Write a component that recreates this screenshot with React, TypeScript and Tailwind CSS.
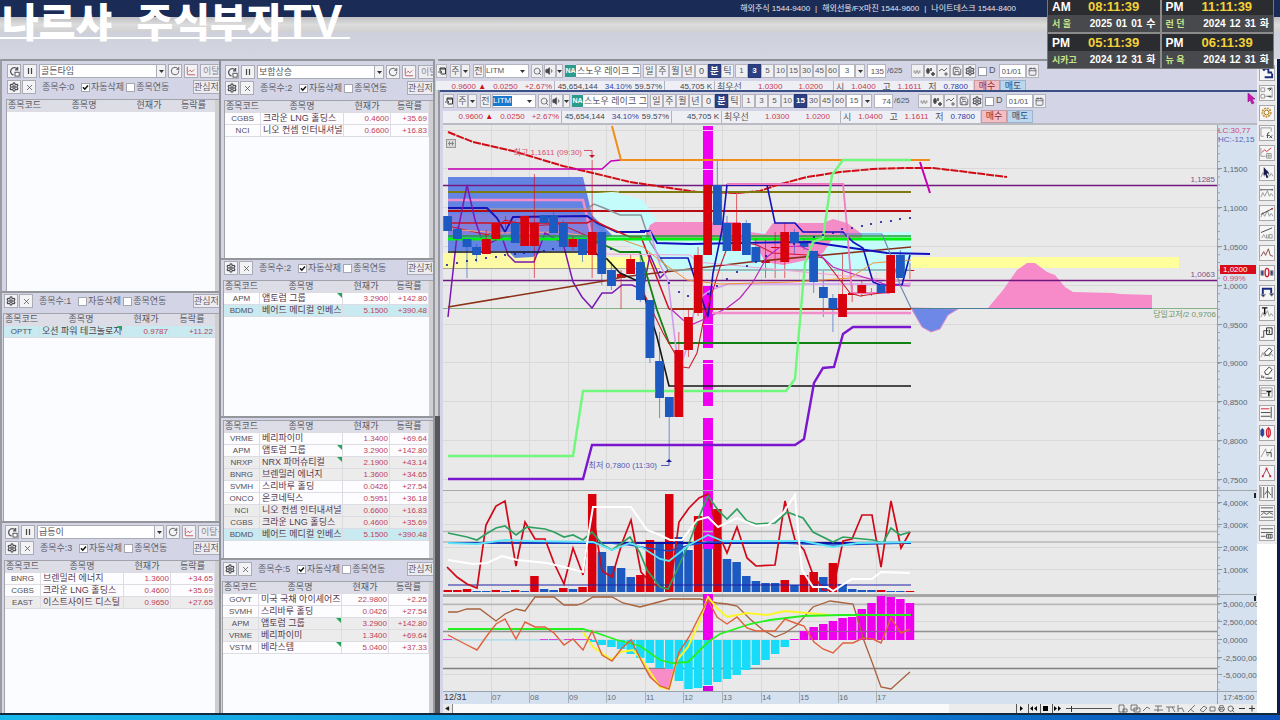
import type { ReactNode } from 'react'
import { Calendar, ChartLine, Play, Printer, RotateCw, Save, Search, Settings, Volume1, X } from 'lucide-react'

type Row = { code: string; name: string; price: string; rate: string; tone?: string; flag?: boolean }

const PLAIN = 'bg-[#fdfdff]'
const GREY = 'bg-[#ececec]'
const CYAN = 'bg-[#c9eaf0]'

const goldenRows: Row[] = []
const optRows: Row[] = [
  { code: 'OPTT', name: '오션 파워 테크놀로지', price: '0.9787', rate: '+11.22', tone: CYAN, flag: true },
]
const surgeRows: Row[] = [
  { code: 'BNRG', name: '브렌밀러 에너지', price: '1.3600', rate: '+34.65' },
  { code: 'CGBS', name: '크라운 LNG 홀딩스', price: '0.4600', rate: '+35.69' },
  { code: 'EAST', name: '이스트사이드 디스틸', price: '0.9650', rate: '+27.65', tone: GREY },
]
const flatRows: Row[] = [
  { code: 'CGBS', name: '크라운 LNG 홀딩스', price: '0.4600', rate: '+35.69' },
  { code: 'NCI', name: '니오 컨셉 인터내셔널', price: '0.6600', rate: '+16.83' },
]
const apmRows: Row[] = [
  { code: 'APM', name: '앱토럼 그룹', price: '3.2900', rate: '+142.80', flag: true },
  { code: 'BDMD', name: '베어드 메디컬 인베스', price: '5.1500', rate: '+390.48', tone: CYAN },
]
const watchRows: Row[] = [
  { code: 'VRME', name: '베리파이미', price: '1.3400', rate: '+69.64' },
  { code: 'APM', name: '앱토럼 그룹', price: '3.2900', rate: '+142.80', flag: true },
  { code: 'NRXP', name: 'NRX 파머슈티컬', price: '2.1900', rate: '+43.14', tone: GREY, flag: true },
  { code: 'BNRG', name: '브렌밀러 에너지', price: '1.3600', rate: '+34.65', tone: GREY },
  { code: 'SVMH', name: '스리바루 홀딩', price: '0.0426', rate: '+27.54' },
  { code: 'ONCO', name: '온코네틱스', price: '0.5951', rate: '+36.18' },
  { code: 'NCI', name: '니오 컨셉 인터내셔널', price: '0.6600', rate: '+16.83', tone: GREY },
  { code: 'CGBS', name: '크라운 LNG 홀딩스', price: '0.4600', rate: '+35.69', tone: GREY },
  { code: 'BDMD', name: '베어드 메디컬 인베스', price: '5.1500', rate: '+390.48', tone: CYAN },
]
const bottomRows: Row[] = [
  { code: 'GOVT', name: '미국 국채 아이셰어즈', price: '22.9800', rate: '+2.25' },
  { code: 'SVMH', name: '스리바루 홀딩', price: '0.0426', rate: '+27.54' },
  { code: 'APM', name: '앱토럼 그룹', price: '3.2900', rate: '+142.80', tone: GREY, flag: true },
  { code: 'VRME', name: '베리파이미', price: '1.3400', rate: '+69.64', tone: GREY },
  { code: 'VSTM', name: '베라스템', price: '5.0400', rate: '+37.33', flag: true },
]

const IconButton = ({ label, children }: { label: string; children: ReactNode }) => (
  <button
    type="button"
    aria-label={label}
    className="flex h-[14px] w-[14px] shrink-0 items-center justify-center border border-[#a9abb5] bg-[#f3f3f6] text-[#4c4c52]"
  >
    {children}
  </button>
)

const Arrow = () => (
  <svg className="h-[3px] w-[5px]" viewBox="0 0 5 3">
    <path d="M0 0h5l-2.5 3z" fill="#333" />
  </svg>
)

const PauseIcon = () => (
  <svg className="h-2 w-2" viewBox="0 0 8 8">
    <path d="M2.5 1v6M5.5 1v6" stroke="#444" strokeWidth="1.2" />
  </svg>
)

const ReloadSaveIcon = () => (
  <svg className="h-[11px] w-[11px]" viewBox="0 0 11 11" fill="none" stroke="#55555c" strokeWidth="1.3">
    <path d="M4.5 9A3.7 3.7 0 1 1 8.4 3.4M8.6 1v2.8H6" />
    <rect x="6" y="6.3" width="4.2" height="3.8" fill="#fff" strokeWidth="1" />
  </svg>
)

const Tick = ({ label, checked }: { label: string; checked?: boolean }) => (
  <label className="flex shrink-0 items-center gap-px whitespace-nowrap">
    <span className="grid h-[9px] w-[9px]">
      <input
        type="checkbox"
        defaultChecked={checked}
        className="peer col-start-1 row-start-1 h-[9px] w-[9px] appearance-none border border-[#a4a6b2] bg-white"
      />
      <svg className="pointer-events-none col-start-1 row-start-1 h-[9px] w-[9px] opacity-0 peer-checked:opacity-100" viewBox="0 0 9 9" fill="none">
        <path d="M2 4.2l1.8 2L7 2.5" stroke="#111" strokeWidth="1.5" />
      </svg>
    </span>
    {label}
  </label>
)

const Controls = ({ title, count, checked }: { title?: string; count: number; checked?: boolean }) => (
  <div className="flex shrink-0 flex-col gap-[2px] overflow-hidden pb-[5px] text-[9px] leading-[14px] text-[#5f6069]">
    {title && (
      <div className="flex gap-[2px] pl-px">
        <IconButton label="재검색"><ReloadSaveIcon /></IconButton>
        <IconButton label="일시정지"><PauseIcon /></IconButton>
        <select
          aria-label="검색식"
          defaultValue={title}
          className="h-[14px] w-[118px] shrink-0 appearance-none border border-[#a9abb5] bg-white pl-[1px] leading-3 text-[#55555c]"
        >
          <option>{title}</option>
        </select>
        <button type="button" aria-label="펼치기" className="-ml-[3px] flex h-[14px] w-[10px] shrink-0 items-center justify-center border border-[#a9abb5] bg-[#f3f3f6]"><Arrow /></button>
        <IconButton label="새로고침"><RotateCw size={10} /></IconButton>
        <IconButton label="차트"><ChartLine size={10} color="#b8424c" /></IconButton>
        <button type="button" className="h-[14px] shrink-0 border border-[#a9abb5] bg-[#ececf2] px-[2px] leading-3 text-[#8a8b93]">이탈삭</button>
      </div>
    )}
    <div className="flex items-center pl-px">
      <IconButton label="설정"><Settings size={10} strokeWidth={3} /></IconButton>
      <span className="w-[1px]" />
      <IconButton label="닫기"><X size={9} /></IconButton>
      <span className="ml-[6px] w-[39px] shrink-0">종목수:{count}</span>
      <Tick label="자동삭제" checked={checked} />
      <span className="w-[2px] shrink-0" />
      <Tick label="종목연동" />
      <button type="button" className="ml-auto h-[14px] w-[26px] shrink-0 overflow-hidden whitespace-nowrap border border-r-0 border-[#a9abb5] bg-[#ececf2] text-left leading-3">관심저</button>
    </div>
  </div>
)

const cell = 'h-3 overflow-hidden whitespace-nowrap border-r border-b border-[#dcdce2] p-0 leading-[11px]'

const StockTable = ({ rows }: { rows: Row[] }) => (
  <div className="flex min-h-0 flex-1 border-l border-t border-[#a2a3aa] bg-[#fbfcff]">
    <div className="min-w-0 flex-1 overflow-hidden">
      <table className="w-full table-fixed border-separate border-spacing-0 text-[9px]">
        <colgroup>
          <col className="w-[36px]" />
          <col className="w-[83px]" />
          <col className="w-[47px]" />
          <col />
        </colgroup>
        <thead className="bg-[#dcdde7] text-[#55565f]">
          <tr>
            {['종목코드', '종목명', '현재가', '등락률'].map((h) => (
              <th key={h} className={`${cell} border-[#c3c4cf] font-normal`}>{h}</th>
            ))}
          </tr>
        </thead>
        <tbody>
          {rows.map((r) => (
            <tr key={r.code} className={r.tone ?? PLAIN}>
              <td className={`${cell} text-center text-[8px] text-[#50505a]`}>{r.code}</td>
              <td className={`${cell} relative pl-[2px] text-[#573a4c]`}>
                {r.name}
                {r.flag && <i className="absolute right-0 top-0 h-0 w-0 border-l-5 border-t-5 border-l-transparent border-t-[#25a55a]" />}
              </td>
              <td className={`${cell} pr-[1px] text-right text-[8px] text-[#c0405c]`}>{r.price}</td>
              <td className={`${cell} pr-[1px] text-right text-[8px] text-[#c0405c]`}>{r.rate}</td>
            </tr>
          ))}
        </tbody>
      </table>
    </div>
    <div className="w-[4px] shrink-0 bg-[#cfcfd2]" />
  </div>
)

const Panel = ({ title, count, checked, rows, pad }: { title?: string; count?: number; checked?: boolean; rows: Row[]; pad: string }) => (
  <section className={`flex min-h-0 flex-col overflow-hidden border-t-2 border-[#95969c] bg-[#d3d5e6] ${pad}`}>
    {count !== undefined && <Controls title={title} count={count} checked={checked} />}
    <StockTable rows={rows} />
  </section>
)

const clocks = [
  { half: 'AM', time: '08:11:39', city: '서 울', date: ['2025', '01', '01', '수'] },
  { half: 'PM', time: '11:11:39', city: '런 던', date: ['2024', '12', '31', '화'] },
  { half: 'PM', time: '05:11:39', city: '시카고', date: ['2024', '12', '31', '화'] },
  { half: 'PM', time: '06:11:39', city: '뉴 욕', date: ['2024', '12', '31', '화'] },
]

const WorldClock = () => (
  <div className="absolute right-[6px] top-[-3px] z-10 grid w-[227px] grid-cols-2 gap-x-[2px] gap-y-[2px] border border-[#777] bg-[#8b8b8b] font-bold">
    {clocks.map((c) => (
      <div key={c.city} className="bg-[#2b2c2f]">
        <div className="flex h-[17px] items-center px-1">
          <span className="w-[36px] text-[12px] text-white">{c.half}</span>
          <span className="text-[13px] text-[#f3d238]">{c.time}</span>
        </div>
        <div className="flex h-[17px] items-center bg-[#48494c] px-1 text-[10px] leading-3">
          <span className="w-[38px] text-[9px] text-[#c6e58a]">{c.city}</span>
          <span className="flex gap-1 whitespace-nowrap text-white">{c.date.map((d, i) => <span key={i}>{d}</span>)}</span>
        </div>
      </div>
    ))}
  </div>
)

const key = 'h-[14px] shrink-0 border border-[#b3b4be] bg-[#f0f0f3] text-center leading-3 text-[#55565e]'
const keyOn = 'h-[14px] shrink-0 border border-[#26387a] bg-[#2c3f80] text-center font-bold leading-3 text-white'

const ChartBar = ({ unit, bars, selected }: { unit: string; bars: string; selected?: boolean }) => (
  <div className="flex h-[18px] items-center overflow-hidden whitespace-nowrap text-[9px] text-[#55565e]">
    <button type="button" aria-label="창" className={`${key} mr-[3px] flex w-[11px] items-center justify-center`}>
      <svg className="h-2 w-2" viewBox="0 0 8 8" fill="none" stroke="#333"><path d="M2 4V1h5.5v6H3M2 2h5.5" /><path d="M0 5h4M2 3.5L4 5 2 6.5" strokeWidth="0.8" /></svg>
    </button>
    <button type="button" className={`${key} w-[11px]`}>주</button>
    <button type="button" aria-label="주기" className={`${key} mr-[3px] flex w-[9px] items-center justify-center`}><Arrow /></button>
    <button type="button" className={`${key} mr-px w-[11px]`}>전</button>
    <div className="flex h-[14px] w-[44px] shrink-0 items-center border border-[#b3b4be] bg-white pr-[3px]">
      <input
        aria-label="종목코드"
        defaultValue="LITM"
        className={selected ? 'h-[10px] w-[19px] bg-[#1878d0] text-[8px] text-white' : 'h-[10px] w-[19px] text-[8px]'}
      />
      <span className="ml-auto"><Arrow /></span>
    </div>
    <button type="button" aria-label="검색" className={`${key} ml-[2px] flex w-[12px] items-center justify-center`}><Search size={9} /></button>
    <button type="button" aria-label="소리" className={`${key} ml-px flex w-[12px] items-center justify-center`}><Volume1 size={10} fill="#444" /></button>
    <button type="button" aria-label="소리 설정" className={`${key} mr-[2px] flex w-[7px] items-center justify-center`}><Arrow /></button>
    <span className="h-[12px] w-[11px] bg-[#2b9c8b] text-center text-[7px] font-bold leading-3 text-white">NA</span>
    <span className="mr-[2px] h-[14px] w-[65px] overflow-hidden border-y border-r border-[#b3b4be] bg-white pl-px leading-3">스노우 레이크 그</span>
    {['일', '주', '월', '년', '0'].map((t) => (
      <button key={t} type="button" className={`${key} w-[13px]`}>{t}</button>
    ))}
    <button type="button" className={`${keyOn} w-[13px]`}>분</button>
    <button type="button" className={`${key} mr-px w-[13px]`}>틱</button>
    {['1', '3', '5', '10', '15', '30', '45', '60'].map((t) => (
      <button key={t} type="button" className={t === unit ? `${keyOn} w-[13px] text-[8px]` : `${key} w-[13px] text-[8px]`}>{t}</button>
    ))}
    <span className="h-[14px] w-[16px] border border-[#b3b4be] bg-white text-center text-[8px] leading-3">{unit}</span>
    <button type="button" aria-label="분 선택" className={`${key} mr-[2px] flex w-[10px] items-center justify-center`}><Arrow /></button>
    <input aria-label="봉 개수" defaultValue={bars} className="h-[14px] w-[19px] border border-[#b3b4be] bg-white pr-px text-right text-[8px]" />
    <span className="w-[25px] pl-px text-[8px]">/625</span>
    {[
      <path key="w" d="M1 3l1.5 4L4 3l1.5 4L7 3M0 5h8" stroke="#999" />,
      <path key="c" d="M2 1v6M1 3h2v2H1zM5 1v3M5 7h4M7 5v4" strokeWidth="1.5" />,
      <path key="l" d="M0 4l3-2 2 2 3-3M5 7h4M7 5v4" />,
    ].map((shape, i) => (
      <button key={i} type="button" aria-label={`도구 ${i + 1}`} className={`${key} flex w-[13px] items-center justify-center`}>
        <svg className="h-[9px] w-[9px]" viewBox="0 0 9 9" fill="none" stroke="#444" strokeWidth="0.8">{shape}</svg>
      </button>
    ))}
    <button type="button" aria-label="저장" className={`${key} flex w-[13px] items-center justify-center`}><Save size={10} /></button>
    <button type="button" aria-label="설정" className={`${key} mr-[2px] flex w-[13px] items-center justify-center`}><Settings size={10} strokeWidth={3} /></button>
    <label className="flex items-center gap-[2px]">
      <input type="checkbox" className="h-[9px] w-[9px] appearance-none border border-[#9799a6] bg-white" />D
    </label>
    <input aria-label="날짜" defaultValue="01/01" className="ml-[3px] h-[14px] w-[27px] border border-[#b3b4be] bg-white pl-[2px] text-[8px]" />
    <button type="button" aria-label="달력" className={`${key} flex w-[13px] items-center justify-center`}><Calendar size={9} /></button>
  </div>
)

const QuoteBar = () => (
  <div className="flex h-[13px] items-center whitespace-nowrap text-[8px] leading-3 text-[#44454c]">
    <div className="flex w-[119px] justify-end gap-[7px] border-r border-[#b3b4be] bg-[#eeeff5] pr-[2px] text-[#cc3a4c]">
      <span>0.9600 <b className="text-[#d01020]">▲</b></span><span>0.0250</span><span>+2.67%</span>
    </div>
    <div className="flex w-[110px] justify-end gap-[3px] border-r border-[#b3b4be] bg-[#eeeff5] pr-[2px]">
      <span className="mr-[4px]">45,654,144</span><span className="text-[#3344a8]">34.10%</span><span>59.57%</span>
    </div>
    <div className="w-[50px] border-r border-[#b3b4be] bg-[#eeeff5] pr-[2px] text-right">45,705 K</div>
    <div className="flex w-[119px] justify-between border-r border-[#b3b4be] bg-[#eeeff5] pl-[2px] pr-[10px] text-[#cc3a4c]">
      <span className="text-[9px] text-[#55565e]">최우선</span><span>1.0300</span><span>1.0200</span>
    </div>
    <div className="mr-px flex w-[139px] justify-between bg-[#eeeff5] pl-[2px] pr-[5px] text-[#cc3a4c]">
      <span className="text-[9px] text-[#55565e]">시</span><span>1.0400</span>
      <span className="text-[9px] text-[#55565e]">고</span><span>1.1611</span>
      <span className="text-[9px] text-[#55565e]">저</span><span className="text-[#2b38a8]">0.7800</span>
    </div>
    <button type="button" className="w-[26px] border border-[#c79aa4] bg-[#f3bfc4] text-[9px] leading-[11px] text-[#8c2430]">매수</button>
    <button type="button" className="w-[26px] border border-[#9db4d0] bg-[#bcd6ee] text-[9px] leading-[11px] text-[#24446c]">매도</button>
  </div>
)

// price axis: 1.0000 sits at y=285, one 0.05 step is 38.8px
const priceTicks = [
  [168, '1,1500'], [207, '1,1000'], [246, '1,0500'], [285, '1,0000'], [324, '0,9500'],
  [362, '0,9000'], [401, '0,8500'], [440, '0,8000'], [479, '0,7500'],
] as const
const volumeTicks = [[502, '4,000K'], [524, '3,000K'], [547, '2,000K'], [569, '1,000K']] as const
const macdTicks = [[603, '5,000,000'], [621, '2,500,000'], [639, '0,0000'], [657, '-2,500,00'], [674, '-5,000,00']] as const
const hours = [[492, '07'], [530, '08'], [569, '09'], [607, '10'], [646, '11'], [684, '12'], [723, '13'], [762, '14'], [800, '15'], [839, '16'], [877, '17']] as const

const barX = (i: number) => 447.7 + i * 9.63
const RED = '#d9000d'
const BLUE = '#1c59c0'

// body top, body bottom, wick top, wick bottom, up
const candles: [number, number, number, number, boolean][] = [
  [216, 231, 216, 231, false], [229, 239, 226, 241, false], [239, 247, 239, 278, false], [247, 255, 244, 262, false],
  [239, 254, 230, 254, true], [223, 239, 223, 241, true], [222, 224, 216, 228, true], [223, 243, 220, 243, false],
  [216, 246, 216, 246, true], [223, 246, 174, 278, true], [215, 223, 215, 223, false], [215, 233, 212, 233, false],
  [223, 247, 220, 247, false], [239, 247, 236, 250, true], [239, 255, 239, 262, false], [232, 255, 160, 278, true],
  [232, 274, 232, 285, false], [270, 286, 262, 290, false], [274, 278, 270, 309, true], [259, 274, 255, 274, true],
  [262, 300, 252, 302, false], [300, 358, 300, 363, false], [361, 398, 332, 418, false], [397, 417, 397, 461, false],
  [350, 417, 332, 417, true], [317, 350, 309, 357, true], [255, 313, 247, 316, true], [185, 255, 185, 255, true],
  [185, 225, 161, 225, false], [223, 251, 216, 251, false], [223, 251, 193, 251, true], [223, 255, 220, 255, false],
  [247, 262, 239, 262, false], [261, 263, 240, 278, true], [247, 248, 232, 278, true], [232, 262, 223, 278, true],
  [232, 243, 229, 255, false], [242, 247, 239, 250, false], [251, 282, 251, 293, false], [287, 298, 271, 317, false],
  [298, 309, 294, 332, false], [294, 317, 254, 317, true], [293, 295, 285, 302, true], [285, 293, 281, 297, true],
  [292, 293, 288, 296, true], [285, 293, 280, 293, false], [255, 293, 255, 293, true], [255, 278, 250, 278, false],
  [270, 271, 263, 279, true],
]

// height in px and direction
const volume: [number, string][] = [
  [2, RED], [2, RED], [3, RED], [1, BLUE], [1, BLUE], [2, RED], [1, BLUE], [2, RED], [1, BLUE], [16, RED],
  [3, BLUE], [2, BLUE], [4, RED], [3, BLUE], [5, RED], [98, RED], [40, BLUE], [26, BLUE], [24, BLUE], [15, BLUE],
  [17, RED], [52, RED], [49, BLUE], [98, RED], [55, BLUE], [42, BLUE], [76, RED], [43, BLUE], [83, RED], [33, BLUE],
  [30, BLUE], [16, BLUE], [11, BLUE], [9, BLUE], [9, BLUE], [12, RED], [7, BLUE], [17, RED], [20, RED], [15, BLUE],
  [29, RED], [8, BLUE], [3, BLUE], [2, BLUE], [2, BLUE], [2, RED], [1, BLUE], [1, BLUE], [1, RED],
]

// starts at bar 15, negative hangs below the zero line
const histogram = [
  -2, -5, -7, -9, -14, -18, -23, -28, -36, -41, -49, -48, -45, -42, -39, -35, -30, -25, -20, -14, -7, 1,
  9, 13, 16, 19, 22, 23, 31, 37, 44, 43, 41, 37,
]

const dots = [
  [447, 265], [457, 263], [467, 261], [476, 260], [486, 258], [496, 257], [505, 255], [515, 254], [524, 253], [534, 252],
  [544, 251], [553, 249], [611, 249], [660, 272], [669, 283], [679, 292], [688, 296], [708, 294], [717, 286], [727, 279],
  [737, 272], [747, 266], [756, 262], [766, 256], [794, 244], [814, 237], [823, 235], [833, 233], [842, 229], [852, 228],
  [862, 226], [871, 224], [881, 222], [891, 221], [900, 219], [910, 218],
]

type Line = { p: string; c: string; w?: number }

// drawn behind the candles
const levels: Line[] = [
  { p: '448,169 602,169 611,161 621,160', c: '#c400b4', w: 1.5 },
  { p: '612,126 621,160 930,160', c: '#f28c18', w: 2 },
  { p: '920,162 930,193', c: '#c400b4', w: 2 },
  { p: '448,192 911,192', c: '#7e7a10', w: 2 },
  { p: '590,194 619,192', c: '#d9ffee', w: 1 },
  { p: '448,200 583,200 592,238', c: '#f48ccc', w: 2.5 },
  { p: '448,211 911,211', c: '#b50c14', w: 2 },
  { p: '448,209 590,209', c: '#caa07a', w: 1 },
  { p: '448,208 487,208 497,218 505,232 513,217 587,216 597,223 617,232 645,232', c: '#1414b8', w: 1.8 },
  { p: '448,223 587,223 593,220 607,227 630,237 641,237 669,309', c: '#d01020', w: 1.5 },
  { p: '587,209 594,204 604,208 620,215 641,215 650,242 668,270', c: '#8a9498', w: 1.5 },
  { p: '448,226 470,231 488,235 505,220 530,226 560,224 592,238', c: '#d01020', w: 1 },
  { p: '448,229 500,233 560,232 592,237', c: '#f9a080', w: 1 },
  { p: '448,317 457,235 467,185 475,220 484,246 502,237 508,255 515,262 534,262 545,233 563,243 573,282 582,297 592,308 602,293 612,293 622,285 632,285 643,290 650,255 660,278 668,270', c: '#7a18b4', w: 1.5 },
  { p: '448,236 911,236', c: '#1e9c3a', w: 1.5 },
  { p: '448,239 911,239', c: '#00f010', w: 3 },
]

const overlays: Line[] = [
  { p: '448,307 610,280 622,277 750,262 911,247', c: '#8c3018', w: 1.6 },
  { p: '448,252 592,252 607,259 620,273 640,282 657,337 669,386 911,386', c: '#161616', w: 1.6 },
  { p: '593,240 620,252 640,252 657,310 669,343 911,343', c: '#128012', w: 1.8 },
  { p: '669,309 911,309', c: '#a4280e', w: 2 },
  { p: '640,231 650,231 657,243 690,244 740,243 810,242 887,253 930,254', c: '#1010c0', w: 1.8 },
  { p: '650,231 660,265 668,280 676,348 681,364 688,345 696,300 711,290 728,284 911,284', c: '#d29af0', w: 1.6 },
  { p: '668,270 911,270', c: '#98a2a0', w: 1.4 },
  { p: '600,254 690,255 697,262 911,282', c: '#f2a4d4', w: 1.2 },
  { p: '660,258 688,258 693,273 708,317 713,273 722,230 727,185 767,185 775,223 795,223 803,232 843,232 853,242 863,248 873,282 880,285 902,285 910,255', c: '#1212b8', w: 1.6 },
  { p: '727,184 843,184 847,227 852,293 890,293', c: '#f07cc0', w: 1.8 },
  { p: '640,285 663,333 677,357 683,367 689,368 697,353 703,323 720,267 730,240 757,245 773,253 807,255 823,258 840,280 850,293 860,296 887,292', c: '#d01828', w: 1.1 },
  { p: '672,310 683,320 693,324 707,318 727,308 740,298 753,282 767,257 780,247 800,246 820,255 833,267 850,273 873,280 887,285 910,286', c: '#bc22c0', w: 1.2 },
  { p: '623,240 643,247 663,263 687,280 720,284 790,282 823,280 850,278 873,263 911,260', c: '#f09038', w: 1 },
  { p: '882,234 890,253 900,285 911,308', c: '#6e8aa8', w: 1.2 },
  { p: '840,234 882,234', c: '#5878d8', w: 1 },
  { p: '712,313 911,313', c: '#f48ccc', w: 2.5 },
  { p: '448,456 573,456 583,391 786,391 795,379 798,343 805,263 813,242 823,238 832,175 843,160 911,160', c: '#6ff87c', w: 2.4 },
  { p: '448,479 583,479 592,445 795,445 804,439 814,383 823,368 834,367 843,334 853,327 911,327', c: '#7a16d0', w: 2.4 },
]

const oscillators: Line[] = [
  { p: '448,543 911,543', c: '#1010a8', w: 2 },
  { p: '448,585 911,585', c: '#2020a8', w: 1.2 },
  { p: '448,543 610,543 630,545 647,548 669,551 690,545 708,542 780,543 833,545 911,543', c: '#1c4cc8', w: 1.5 },
  { p: '447,567 457,577 467,584 477,588 486,525 496,506 505,501 516,566 525,522 535,539 545,539 554,563 564,584 573,548 583,575 592,507 602,571 612,577 622,543 631,520 641,572 650,582 660,587 670,590 679,522 689,508 699,498 708,494 717,530 727,553 737,527 747,558 756,566 775,565 785,501 795,540 804,550 812,572 823,590 833,590 843,541 852,539 862,515 872,515 881,567 891,501 901,548 910,532', c: '#d00818', w: 1.7 },
  { p: '448,533 467,537 477,540 486,534 496,528 505,526 516,535 527,527 545,529 554,532 564,537 573,535 583,540 592,532 603,545 612,550 630,537 640,553 647,570 660,587 668,589 677,570 689,543 699,517 708,496 718,510 727,519 737,509 747,521 756,524 775,523 787,512 803,518 813,532 833,542 843,537 873,540 883,543 891,528 900,535 910,532', c: '#2fa060', w: 1.7 },
  { p: '448,543 477,544 505,540 530,541 593,542 612,550 630,543 643,548 660,559 669,561 679,553 689,545 708,535 723,541 803,541 833,547 857,543 911,542', c: '#5ee4f8', w: 1.8 },
  { p: '448,560 473,564 487,563 502,556 517,560 547,563 564,567 583,572 588,537 593,507 631,507 647,530 660,535 670,540 682,540 697,520 708,517 718,527 737,518 756,526 768,525 783,513 795,495 798,530 802,570 813,587 827,587 833,591 852,579 872,579 881,572 910,573', c: '#ffffff', w: 2 },
]

const macdLines: Line[] = [
  { p: '448,612 457,612 467,609 480,609 496,621 505,614 516,609 525,611 535,597 554,597 564,605 577,605 583,603 593,597 612,597 623,603 640,607 670,599 700,599 717,603 727,604 737,606 750,619 763,630 775,637 785,633 797,625 813,607 830,601 853,604 858,620 863,638 872,662 881,687 891,689 902,679 910,672', c: '#a8603c', w: 1.3 },
  { p: '583,632 593,647 612,660 620,652 633,650 642,660 660,687 669,689 677,660 688,647 699,623 708,597 717,608 727,617 747,613 767,615 785,611 807,613 830,615', c: '#fbf52c', w: 2 },
  { p: '448,629 583,629 597,633 617,640 640,646 660,660 672,663 688,662 697,653 708,642 720,634 750,624 770,620 803,616 840,615 911,615', c: '#28f020', w: 1.8 },
  { p: '448,635 467,645 477,650 486,637 496,624 505,619 516,639 525,622 535,627 545,627 554,633 564,645 573,639 583,650 592,631 602,655 612,661 622,648 631,640 641,660 650,677 660,686 669,689 679,652 689,637 699,617 708,600 717,617 727,624 737,617 747,628 756,631 775,631 785,619 795,623 804,626 814,642 823,649 833,653 843,643 853,643 863,638 873,639 881,643 891,618 901,633 910,629', c: '#e0603c', w: 1.4 },
]

const Lines = ({ of }: { of: Line[] }) => (
  <>{of.map((l) => <polyline key={l.p} points={l.p} stroke={l.c} strokeWidth={l.w} />)}</>
)

const Chart = () => (
  <svg
    className="block h-full w-full font-['Liberation_Sans','Noto_Sans_CJK_KR',sans-serif] text-[8px]"
    viewBox="443 125 814 579"
    preserveAspectRatio="xMinYMin meet"
    fill="none"
  >
    <rect x="443" y="125" width="774" height="566" fill="#e9e9e9" />
    <rect x="1217" y="125" width="40" height="579" fill="#d5e1ee" />
    <rect x="443" y="691" width="774" height="13" fill="#d5e1ee" />

    <g stroke="#d9d9d9">
      {[130, ...priceTicks.map(([y]) => y), ...volumeTicks.map(([y]) => y), ...macdTicks.map(([y]) => y)].map((y) => (
        <path key={y} d={`M443 ${y + 0.5}H1217`} />
      ))}
      {hours.map(([x]) => <path key={x} d={`M${x - 0.5} 125V691`} />)}
    </g>

    {/* clouds */}
    <rect x="448" y="257" width="731" height="11" fill="#ffff9c" />
    <rect x="443" y="253" width="150" height="15" fill="#fdfaa6" />
    <path d="M588 193H617L643 200 658 223 670 232H911V272H668L655 262 640 252 620 240 602 230Z" fill="#c4fcfc" />
    <path d="M592 206L604 209 620 216 641 217 650 236 610 236 596 222Z" fill="#e3eeee" />
    <path d="M448 177H583L592 215 612 235 600 240 592 251H543L533 257 515 258 508 251H448Z" fill="#6484e4" />
    <path d="M448 214H588L600 232 592 236H448Z" fill="#8080dc" />
    <path d="M645 238L650 225 655 222H740L750 232 765 234 773 223H823L833 219 847 223 862 234V238H833L823 253 807 260 783 265 765 262 757 247 752 238Z" fill="#f48cc8" />
    <path d="M911 308L922 327 931 332 940 329 948 315 958 309Z" fill="#6e88e8" stroke="#e08cc8" />
    <path d="M988 308L1003 290 1017 270 1027 263H1035L1047 272 1055 275 1065 287 1073 292 1113 293 1120 294 1152 295V308Z" fill="#f78bca" />

    {/* current session column */}
    <g fill="#f000f0">
      <rect x="703" y="126" width="10" height="60" />
      <rect x="703" y="286" width="10" height="62" />
      <rect x="703" y="360" width="10" height="46" />
      <rect x="703" y="418" width="10" height="131" />
    </g>
    <path d="M703 130.5h10M703 169.5h10M703 324.5h10M703 363.5h10M703 391.5h10M703 440.5h10M703 479.5h10" stroke="#ffc0ff" />

    <path d="M443 185.5H1217M443 280.5H1217" stroke="#701880" strokeWidth="1.5" />
    <path d="M443 268.5H660" stroke="#a8a890" />
    <path d="M443 308.5H1217" stroke="#86b286" />
    <path d="M911 308.5H1152" stroke="#4c8098" />
    <path
      d="M448 132L473 142 513 151 563 166 597 174 630 182 670 188 697 192 737 193 760 191 777 185 807 177 840 172 873 169 907 168 933 168 967 172 1007 177"
      stroke="#d00c14" strokeWidth="2" strokeDasharray="8 1"
    />
    <Lines of={levels} />

    {candles.map(([top, bottom, hi, lo, up], i) => (
      <g key={i} fill={up ? RED : BLUE}>
        <rect x={barX(i) - 0.5} y={hi} width="1" height={lo - hi} opacity="0.6" />
        <rect x={barX(i) - 4.2} y={top} width="8.5" height={bottom - top} />
      </g>
    ))}
    <Lines of={overlays} />
    {candles.map(([top, bottom, , , up], i) =>
      bottom - top > 6 ? <rect key={i} x={barX(i) - 4.2} y={top} width="8.5" height={bottom - top} fill={up ? RED : BLUE} /> : null,
    )}
    {dots.map(([x, y]) => <circle key={x} cx={x} cy={y} r="1.1" fill="#1818a0" />)}

    <g stroke="#b8b8b8">
      <path d="M443 490.5H1257M443 594.5H1257" stroke="#a4a8ac" />
      <path d="M443 531.5H1217M443 542H1217M443 604.5H1217" strokeWidth="1.5" />
      <path d="M443 596H1217" stroke="#8c8c8c" strokeWidth="1.5" />
      <path d="M443 631.5H1217" stroke="#909090" strokeWidth="1.5" />
      <path d="M443 668.5H1217" stroke="#808080" strokeWidth="1.5" />
    </g>

    {/* volume */}
    {volume.map(([h, c], i) => <rect key={i} x={barX(i) - 4.2} y={592 - h} width="8.5" height={h} fill={c} />)}
    <Lines of={oscillators} />

    {/* macd */}
    <path d="M443 640H592" stroke="#98dcf0" />
    <path d="M443 639.5h9M540 639.5h8M549 639.5h9M564 639.5h28" stroke="#e040e0" />
    <rect x="703" y="594" width="10" height="46" fill="#f000f0" />
    {histogram.map((h, i) => (
      <rect key={i} x={barX(i + 15) - 4.2} y={h > 0 ? 640 - h : 640} width="8.5" height={Math.abs(h)} fill={h > 0 ? '#ee00ee' : '#16dcfa'} />
    ))}
    <rect x="703" y="686" width="10" height="5" fill="#d000e0" />
    <path d="M645 669H675L669 689 660 686 650 677Z" fill="#f88cc8" />
    <path d="M812 631.5H911" stroke="#a050a0" />
    <Lines of={macdLines} />

    {/* axes */}
    <path d="M1217.5 125V704M443 691.5H1257" stroke="#9aa2aa" />
    {[...priceTicks, ...volumeTicks, ...macdTicks].map(([y, t]) => (
      <g key={t}>
        <path d={`M1217 ${y + 0.5}h5`} stroke="#8c949c" />
        <text x="1223" y={y + 4} fill="#5c6672">{t}</text>
      </g>
    ))}
    <path d="M1219 130V690" stroke="#9aa2aa" strokeWidth="2" strokeDasharray="1 6.77" />
    {hours.map(([x, t]) => (
      <g key={t}>
        <path d={`M${x - 0.5} 691V703`} stroke="#a8b0b8" />
        <text x={x} y="700" fill="#687078">{t}</text>
      </g>
    ))}
    <text x="444" y="700" fill="#33363c" className="text-[9px]">12/31</text>
    <text x="1223" y="700" fill="#5c6672">17:45:00</text>
    <rect x="1220" y="265" width="36" height="9" fill="#d90a18" />
    <text x="1223" y="272" fill="#fff">1,0200</text>
    <text x="1223" y="281" fill="#d8487c">0.99%</text>
    <text x="1218" y="133" fill="#d0487c">LC:30,77</text>
    <text x="1218" y="142" fill="#5468c0">HC:-12,15</text>
    <g textAnchor="end">
      <text x="1215" y="182" fill="#7c5088">1,1285</text>
      <text x="1215" y="277" fill="#7c5088">1,0063</text>
      <text x="1216" y="317" fill="#6a986a">당일고저/2 0,9706</text>
      <text x="582" y="155" fill="#d85070">최고 1,1611 (09:30)</text>
      <text x="657" y="468" fill="#5458b8">최저 0,7800 (11:30)</text>
    </g>
    <path d="M584 150.5h8v5" stroke="#d85070" />
    <path d="M589 155h6l-3 3z" fill="#c01828" />
    <path d="M661 465.5h8v-5" stroke="#5458b8" />
    <path d="M666 462h6l-3-3z" fill="#1818a0" />
    <rect x="446.5" y="139.5" width="9" height="8" fill="#d8d8d8" stroke="#999" />
    <path d="M448 143.5h6M449.5 141.5v4M452.5 141.5v4" stroke="#888" />
    <path d="M1255 493v5M1255 596v5" stroke="#222" strokeWidth="2" />
  </svg>
)

const transport = [
  { name: '재생', d: 'M3 2l3 2.5L3 7z' },
  { name: '뒤로', d: 'M4 2L1 4.5 4 7zM8 2L5 4.5 8 7z' },
  { name: '정지', d: 'M2 2h5v5H2z' },
  { name: '앞으로', d: 'M1 2l3 2.5L1 7zM5 2l3 2.5L5 7z' },
]

const ChartTail = () => (
  <div className="flex h-[9px] shrink-0 items-center overflow-hidden bg-[#ececec] text-[#333]">
    <button type="button" aria-label="이전" className="flex h-full w-[10px] items-center justify-center border-r border-[#888]">
      <Play size={5} fill="#111" className="rotate-180" />
    </button>
    <div className="h-full w-[496px] bg-[#fafafa]" />
    <div className="ml-auto flex items-center gap-[2px]">
      {transport.map((t) => (
        <button key={t.name} type="button" aria-label={t.name} className="border-l border-[#555]">
          <svg className="h-[9px] w-[9px]" viewBox="0 0 9 9"><path d={t.d} fill="#000" /></svg>
        </button>
      ))}
      <input
        type="range"
        aria-label="봉 간격"
        defaultValue={12}
        className="ml-[2px] h-px w-[46px] appearance-none bg-[#555] [&::-webkit-slider-thumb]:h-[6px] [&::-webkit-slider-thumb]:w-px [&::-webkit-slider-thumb]:appearance-none [&::-webkit-slider-thumb]:bg-[#333]"
      />
      <svg className="ml-[4px] h-[9px] w-[98px]" viewBox="0 0 98 9" fill="none" stroke="#666" strokeWidth="0.9">
        <path d="M1 1h5v7H1zM5 5h4v3H5zM13 1h6v5h-6zM16 4h6v4h-6zM25 7l4-4 3 2M37 2h7M40 2v6M36 6h9M48 3h9M51 3v5M54 3l3 5M60 1v7M60 5l4-1 2 4M70 8l7-7M72 5l4 3M82 6l4-4 3 2-4 4zM92 3h5v4h-5z" />
      </svg>
      <Printer size={7} />
      <Search size={8} />
      <svg className="h-[9px] w-[20px]" viewBox="0 0 20 9"><path d="M2 4.5h6M12 4.5h6M15 1.5v6" stroke="#333" /></svg>
    </div>
  </div>
)

const W = 'M1 12l2-5 2 4 3-6 2 6 2-3 2 3'
const tools: { name: string; art: ReactNode }[] = [
  { name: '되돌리기', art: <path d="M3 3h6v4h4M3 3l2-2M3 3l2 2M13 8v4H5" stroke="#1c2c80" strokeWidth="2" /> },
  { name: '연결', art: <><path d="M1 2h4v4H1zM1 9h4v4H1zM10 2h3M10 12h3M13 2v10M5 11h3" /><path d="M8 3h4l-2 2M8 11h4" stroke="#222" /></> },
  { name: '환경설정', art: <><circle cx="7" cy="7" r="4.5" stroke="#c89438" strokeWidth="2" strokeDasharray="2 1" /><circle cx="7" cy="7" r="2.5" stroke="#a87820" /></> },
  { name: '수식', art: <><path d="M1 2h11v4M1 2v9h3" /><path d="M8 13V9q0-2 2-2M7 10h3M10 10l3 3M13 10l-3 3" stroke="#444" /></> },
  { name: '지표추가', art: <><path d="M1 2v9h5" /><path d="M2 7l3-3 2 2 5-4" stroke="#d02838" /><path d="M7 8h5v5H7zM9.5 8v5M7 10.5h5" /></> },
  { name: '선택', art: <><path d={W} /><path d="M4 1l6 7H7l2 4-2 1-1-4-2 1z" fill="#18184c" stroke="none" /></> },
  { name: '수평선', art: <><path d={W} /><path d="M1 4h13M1 3v2M13 3v2" stroke="#555" /></> },
  { name: '추세선', art: <><path d={W} /><path d="M1 9L13 3" stroke="#444" /><circle cx="13" cy="3" r="1" fill="#a33" stroke="none" /></> },
  { name: '자동추세', art: <><path d="M1 7L13 2" stroke="#444" /><path d="M2 13l2-4 2 4M7 9v4h2V9M10 9h3v4h-3z" /></> },
  { name: '파동', art: <path d="M1 11l3-5 2 4 3-7 2 7 3 1" stroke="#844" /> },
  { name: '캔들', art: <><path d="M1 5h3v5H1zM11 5h3v5h-3z" fill="#2c4490" /><ellipse cx="7.5" cy="7" rx="2" ry="4.5" stroke="#d02030" strokeWidth="1.5" /></> },
  { name: '되감기', art: <><path d="M3 11V3h9v7" stroke="#182878" strokeWidth="2" /><path d="M1 9h5l-2.5 3zM10 8h5l-2.5 3z" fill="#182878" /></> },
  { name: '문자', art: <><path d={W} /><path d="M2 2h6M5 2v6M4 8h2" stroke="#111" strokeWidth="1.5" /></> },
  { name: '숫자', art: <><path d="M1 12h3V5h5" stroke="#444" /><path d="M7 2h6v7H7zM10 4v4" stroke="#222" /></> },
  { name: '지우개', art: <><path d={W} /><path d="M5 7l5-5 3 3-4 5H6z" fill="#fff" stroke="#333" /></> },
  { name: '전체지우기', art: <><path d="M5 6l5-5 3 3-4 5H6z" fill="#fff" stroke="#333" /><path d="M2 13v-3M4 13v-2M6 13h7" stroke="#222" /></> },
  { name: '글상자', art: <><path d="M1 2h12v10H1zM1 5h12M1 8h6" /><path d="M7 6h5M9.5 6v5" stroke="#111" strokeWidth="1.5" /></> },
  { name: '가격선', art: <><path d="M1 3h9" stroke="#d02030" /><path d="M1 7h10M1 11h10M12 1v12" stroke="#444" /></> },
  { name: '봉비교', art: <><path d="M1 4h3v6H1zM2.5 2v10" fill="#2c4490" stroke="#2c4490" /><ellipse cx="9" cy="7" rx="2" ry="4.5" stroke="#d02030" strokeWidth="1.5" /><path d="M9 1v12" stroke="#d02030" /></> },
  { name: '분석', art: <><path d="M1 12l5-9 2 8 5-8" /><path d="M7 7h5v5" stroke="#444" /></> },
  { name: '꼭지점', art: <><path d="M3 11l4-8 4 8" stroke="#a03850" /><path d="M2 10h2v2H2zM10 10h2v2h-2zM6 2h2v2H6z" fill="#c02040" stroke="none" /></> },
  { name: '세로선', art: <path d="M1 1v12M4 1v12M8 1v12M13 1v12M5 9l3-4 4 5" stroke="#555" /> },
  { name: '채널', art: <path d="M1 2h13M1 6h13M1 12h13M1 10l3-3 3 2 3-2 4 2" stroke="#555" /> },
  { name: '거래', art: <path d="M1 3h13M1 7h13M7 9h6v4H7zM9 9v4M11 9v4M1 11h5" stroke="#555" /> },
]

const App = () => {
  return (
    <div className="relative flex h-screen w-full flex-col overflow-hidden bg-[#d3d5e6] font-['Liberation_Sans','Noto_Sans_CJK_KR',sans-serif]">
      <header className="relative h-[59px] shrink-0 bg-linear-to-b from-[#c6c8d2] to-[#d4d6e2]">
        <div className="flex h-[17px] justify-end gap-[5px] bg-[#1a2b55] pr-[264px] text-[8px] leading-[17px] text-[#e2e6f0]">
          <span>해외주식 1544-9400</span>
          <span>|</span>
          <span>해외선물/FX마진 1544-9600</span>
          <span>|</span>
          <span>나이트데스크 1544-8400</span>
        </div>
        <div className="h-[15px] bg-linear-to-b from-[#c0c0c4] via-[#dcdcdc] to-[#d0d0d2]" />
        <h1 className="absolute left-0 top-0 flex h-[39px] items-baseline gap-6 whitespace-nowrap border-b-2 border-white pl-[2px] pr-2 text-[40px] font-black leading-[43px] text-white">
          <span>나르샤</span>
          <span>주식부자<span className="text-[46px]">TV</span></span>
        </h1>
        <WorldClock />
      </header>

      <main className="grid min-h-0 flex-1 grid-cols-[219px_214px_7px_minmax(0,1fr)_20px_3px]">
        <div className="grid min-h-0 grid-rows-[232fr_230fr_192fr] border-l-2 border-[#9b9ca2]">
          <Panel title="골든타임" count={0} checked rows={goldenRows} pad="pl-1 pt-[3px]" />
          <Panel count={1} rows={optRows} pad="pl-px pt-px" />
          <Panel title="급등이" count={3} checked rows={surgeRows} pad="pl-[2px] pt-[2px]" />
        </div>
        <div className="grid min-h-0 grid-rows-[199fr_158fr_142fr_155fr] border-l-2 border-[#8f9096]">
          <Panel title="보합상승" count={2} checked rows={flatRows} pad="pl-[3px] pt-[4px]" />
          <Panel count={2} checked rows={apmRows} pad="pl-[2px] pt-px" />
          <Panel rows={watchRows} pad="pl-[2px] pt-[2px]" />
          <Panel count={5} checked rows={bottomRows} pad="pl-px pt-[2px]" />
        </div>
        <div className="grid grid-rows-[357fr_297fr]">
          <div className="border-x-2 border-[#97989e] bg-[#cfd0d8]" />
          <div className="border-l-2 border-[#97989e] bg-[#56575b]" />
        </div>
        <div className="flex min-h-0 flex-col border-t-2 border-[#8e9096]">
          <div className="-ml-[4px] h-[29px] shrink-0 overflow-hidden bg-[#d3d5e6] pt-px">
            <ChartBar unit="3" bars="135" />
            <QuoteBar />
          </div>
          <div className="flex min-h-0 flex-1 flex-col border-t-2 border-[#3c5088] pl-[3px]">
            <div className="h-[33px] shrink-0 border-b-2 border-[#b9bac2]">
              <ChartBar unit="15" bars="74" selected />
              <QuoteBar />
            </div>
            <div className="min-h-0 flex-1"><Chart /></div>
            <ChartTail />
          </div>
        </div>
        <aside className="flex flex-col bg-white">
          <div className="flex flex-col gap-[4px] bg-[#ececec] px-[2px] pb-[3px] pt-[6px]">
            {tools.map((t) => (
              <button key={t.name} type="button" aria-label={t.name} className="flex h-[16px] w-[16px] items-center justify-center border border-[#a8a8ac] bg-[#f6f6f6]">
                <svg className="h-[14px] w-[14px]" viewBox="0 0 15 15" fill="none" stroke="#999" strokeWidth="1">{t.art}</svg>
              </button>
            ))}
          </div>
        </aside>
        <div className="bg-[#0c1c50]" />
      </main>

      <svg className="absolute right-[24px] top-[92px] h-[13px] w-[9px]" viewBox="0 0 9 13">
        <path d="M1 1v9l2-2 2 4 2-1-2-4h3z" fill="#d010b8" stroke="#801078" strokeWidth="0.6" />
      </svg>

      <footer className="h-[7px] shrink-0 border-t-2 border-[#14283c] bg-linear-to-r from-[#18b8ec] via-[#1490dc] to-[#0c50b8]" />
    </div>
  )
}

export default App
